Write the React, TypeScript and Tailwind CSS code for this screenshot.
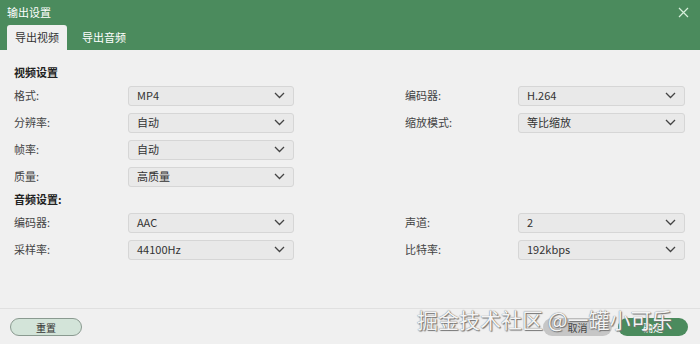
import React from "react";

const font = { fontFamily: '"Noto Sans CJK SC", "Noto Sans", sans-serif' };

function Chevron() {
  return (
    <svg width="11" height="7" viewBox="0 0 11 7" fill="none">
      <path d="M1 1 L5.5 5.5 L10 1" stroke="#444" strokeWidth="1.3" />
    </svg>
  );
}

function Select({ value, w }: { value: string; w: string }) {
  return (
    <div
      className={`${w} h-[20px] flex items-center justify-between pl-[8px] pr-[8px] bg-[#e9e9e9] border border-[#d6d6d6] rounded-[3px] text-[11px] text-[#333]`}
    >
      <span>{value}</span>
      <Chevron />
    </div>
  );
}

function Row({
  l1,
  v1,
  l2,
  v2,
}: {
  l1: string;
  v1: string;
  l2?: string;
  v2?: string;
}) {
  return (
    <div className="h-[27px] flex items-center">
      <div className="w-[114px] text-[11px] text-[#444]">{l1}</div>
      <Select value={v1} w="w-[166px]" />
      {l2 && (
        <>
          <div className="w-[111px]" />
          <div className="w-[113px] text-[11px] text-[#444]">{l2}</div>
          <Select value={v2 || ""} w="w-[167px]" />
        </>
      )}
    </div>
  );
}

export default function App() {
  return (
    <div className="relative w-[700px] h-[344px] bg-[#f0f0f0] flex flex-col overflow-hidden" style={font}>
      <div className="h-[50px] bg-[#4b8b5d] flex flex-col">
        <div className="h-[25px] flex items-center justify-between pl-[7px] pr-[11px]">
          <span className="text-[11px] text-white">输出设置</span>
          <svg width="11" height="11" viewBox="0 0 11 11">
            <path d="M1 1 L10 10 M10 1 L1 10" stroke="#d8f0dc" strokeWidth="1.2" />
          </svg>
        </div>
        <div className="h-[25px] flex items-end pl-[7px]">
          <div className="w-[60px] h-[25px] bg-[#f0f0f0] rounded-t-[3px] flex items-center justify-center text-[11px] text-[#333]">
            导出视频
          </div>
          <div className="w-[74px] h-[25px] flex items-center justify-center text-[11px] text-white">
            导出音频
          </div>
        </div>
      </div>

      <div className="h-[258px] px-[14px] pt-[12px] flex flex-col">
        <div className="h-[20px] flex items-center text-[11px] font-bold text-[#222]">视频设置</div>
        <Row l1="格式:" v1="MP4" l2="编码器:" v2="H.264" />
        <Row l1="分辨率:" v1="自动" l2="缩放模式:" v2="等比缩放" />
        <Row l1="帧率:" v1="自动" />
        <Row l1="质量:" v1="高质量" />
        <div className="h-[19px] flex items-center text-[11px] font-bold text-[#222]">音频设置:</div>
        <Row l1="编码器:" v1="AAC" l2="声道:" v2="2" />
        <Row l1="采样率:" v1="44100Hz" l2="比特率:" v2="192kbps" />
      </div>

      <div className="flex-1 border-t border-[#e0e0e0] flex items-start pt-[9px] px-[10px]">
        <div className="w-[72px] h-[18px] rounded-full bg-[#d3e4d9] border border-[#8a9a90] flex items-center justify-center text-[10px] text-[#333]">
          重置
        </div>
        <div className="flex-1" />
        <div className="w-[69px] h-[18px] rounded-full bg-[#c6c6c6] flex items-center justify-center text-[10px] text-[#444]">
          取消
        </div>
        <div className="w-[70px] h-[18px] ml-[6px] mr-[2px] rounded-full bg-[#4b8b5d] flex items-center justify-center text-[10px] text-white">
          确定
        </div>
      </div>

      <div className="absolute left-[417px] top-[305px] text-[21px] leading-[28px] text-[#f4f4f4] whitespace-nowrap [text-shadow:0_0_1px_#555,1px_1px_1px_#777]">
        掘金技术社区 @一罐小可乐
      </div>
    </div>
  );
}
